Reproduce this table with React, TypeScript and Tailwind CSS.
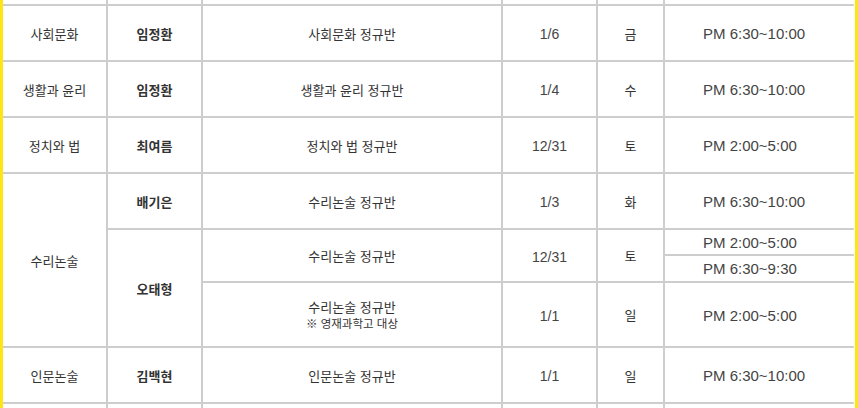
import React from "react";

const base = "bg-white flex items-center justify-center pt-[3px] text-[#333]";

function Blank({ pos }: { pos: string }) {
  return <div className={`bg-white ${pos}`} />;
}

function Subject({ t, pos }: { t: string; pos: string }) {
  return <div className={`${base} text-[13px] ${pos}`}>{t}</div>;
}
function Teacher({ t, pos }: { t: string; pos: string }) {
  return <div className={`${base} text-[13px] font-bold text-[#2f2f3c] ${pos}`}>{t}</div>;
}
function ClassName({ t, sub, pos }: { t: string; sub?: string; pos: string }) {
  return (
    <div className={`${base} flex-col text-[13px] ${pos}`}>
      <span className="leading-[16px]">{t}</span>
      {sub && <span className="text-[11.5px] leading-[16px]">{sub}</span>}
    </div>
  );
}
function DateC({ t, pos }: { t: string; pos: string }) {
  return <div className={`${base} text-[14px] text-[#444] ${pos}`}>{t}</div>;
}
function Day({ t, pos }: { t: string; pos: string }) {
  return <div className={`${base} text-[13px] ${pos}`}>{t}</div>;
}
function Time({ t, pos }: { t: string; pos: string }) {
  return <div className={`${base} justify-start pl-[38px] text-[15px] text-[#444] ${pos}`}>{t}</div>;
}

export default function App() {
  return (
    <div className="w-[858px] h-[408px] flex bg-white overflow-hidden font-['Liberation_Sans','Noto_Sans_CJK_KR',sans-serif]">
      <div className="w-[3px] bg-[#fde614]" />
      <div className="grid gap-[2px] bg-[#cdcdcd] w-[851px] h-[408px] grid-cols-[103px_93px_298px_93px_65px_189px] grid-rows-[4px_54px_54px_54px_54px_51px_63px_54px_4px]">
        <Blank pos="col-start-1 row-start-1" />
        <Blank pos="col-start-2 row-start-1" />
        <Blank pos="col-start-3 row-start-1" />
        <Blank pos="col-start-4 row-start-1" />
        <Blank pos="col-start-5 row-start-1" />
        <Blank pos="col-start-6 row-start-1" />

        <Subject t="사회문화" pos="col-start-1 row-start-2" />
        <Teacher t="임정환" pos="col-start-2 row-start-2" />
        <ClassName t="사회문화 정규반" pos="col-start-3 row-start-2" />
        <DateC t="1/6" pos="col-start-4 row-start-2" />
        <Day t="금" pos="col-start-5 row-start-2" />
        <Time t="PM 6:30~10:00" pos="col-start-6 row-start-2" />

        <Subject t="생활과 윤리" pos="col-start-1 row-start-3" />
        <Teacher t="임정환" pos="col-start-2 row-start-3" />
        <ClassName t="생활과 윤리 정규반" pos="col-start-3 row-start-3" />
        <DateC t="1/4" pos="col-start-4 row-start-3" />
        <Day t="수" pos="col-start-5 row-start-3" />
        <Time t="PM 6:30~10:00" pos="col-start-6 row-start-3" />

        <Subject t="정치와 법" pos="col-start-1 row-start-4" />
        <Teacher t="최여름" pos="col-start-2 row-start-4" />
        <ClassName t="정치와 법 정규반" pos="col-start-3 row-start-4" />
        <DateC t="12/31" pos="col-start-4 row-start-4" />
        <Day t="토" pos="col-start-5 row-start-4" />
        <Time t="PM 2:00~5:00" pos="col-start-6 row-start-4" />

        <Subject t="수리논술" pos="col-start-1 row-start-5 row-span-3" />
        <Teacher t="배기은" pos="col-start-2 row-start-5" />
        <ClassName t="수리논술 정규반" pos="col-start-3 row-start-5" />
        <DateC t="1/3" pos="col-start-4 row-start-5" />
        <Day t="화" pos="col-start-5 row-start-5" />
        <Time t="PM 6:30~10:00" pos="col-start-6 row-start-5" />

        <Teacher t="오태형" pos="col-start-2 row-start-6 row-span-2" />
        <ClassName t="수리논술 정규반" pos="col-start-3 row-start-6" />
        <DateC t="12/31" pos="col-start-4 row-start-6" />
        <Day t="토" pos="col-start-5 row-start-6" />
        <div className="col-start-6 row-start-6 grid grid-rows-[24px_25px] gap-[2px] bg-[#cdcdcd]">
          <div className="bg-white flex items-center pt-[2px] pl-[38px] text-[15px] text-[#444]">PM 2:00~5:00</div>
          <div className="bg-white flex items-center pt-[1px] pl-[38px] text-[15px] text-[#444]">PM 6:30~9:30</div>
        </div>

        <ClassName t="수리논술 정규반" sub="※ 영재과학고 대상" pos="col-start-3 row-start-7" />
        <DateC t="1/1" pos="col-start-4 row-start-7" />
        <Day t="일" pos="col-start-5 row-start-7" />
        <Time t="PM 2:00~5:00" pos="col-start-6 row-start-7" />

        <Subject t="인문논술" pos="col-start-1 row-start-8" />
        <Teacher t="김백현" pos="col-start-2 row-start-8" />
        <ClassName t="인문논술 정규반" pos="col-start-3 row-start-8" />
        <DateC t="1/1" pos="col-start-4 row-start-8" />
        <Day t="일" pos="col-start-5 row-start-8" />
        <Time t="PM 6:30~10:00" pos="col-start-6 row-start-8" />

        <Blank pos="col-start-1 row-start-9" />
        <Blank pos="col-start-2 row-start-9" />
        <Blank pos="col-start-3 row-start-9" />
        <Blank pos="col-start-4 row-start-9" />
        <Blank pos="col-start-5 row-start-9" />
        <Blank pos="col-start-6 row-start-9" />
      </div>
      <div className="w-[1px] bg-white" />
      <div className="w-[3px] bg-[#fde614]" />
    </div>
  );
}
